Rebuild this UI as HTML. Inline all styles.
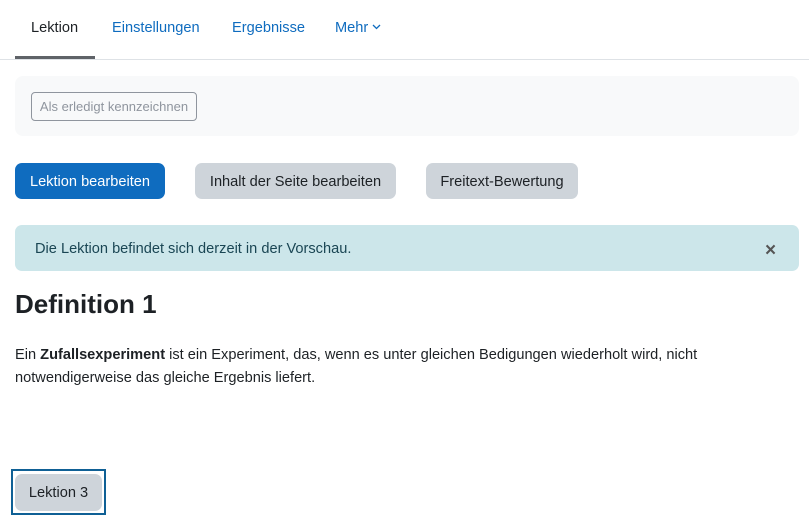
<!DOCTYPE html>
<html><head><meta charset="utf-8"><style>
*{box-sizing:border-box;margin:0;padding:0}
body{width:809px;height:529px;background:#fff;font-family:"Liberation Sans",sans-serif;color:#1d2125;font-size:14.6px;position:relative;overflow:hidden}
.a{position:absolute}
.tab{top:20px;font-size:14.6px;color:#0f6cbf}
.btn{position:absolute;top:163px;height:36px;border-radius:7px;font-size:14.6px;line-height:38px;text-align:center;background:#ced4da;color:#1d2125}
</style></head><body>
<div class="a tab" style="left:31px;color:#1d2125">Lektion</div>
<div class="a tab" style="left:112px">Einstellungen</div>
<div class="a tab" style="left:232px">Ergebnisse</div>
<div class="a tab" style="left:335px">Mehr <svg width="9" height="6" viewBox="0 0 9 6" style="vertical-align:2px"><path d="M1 1l3.5 3.5L8 1" stroke="#0f6cbf" stroke-width="1.3" fill="none"/></svg></div>
<div class="a" style="left:15px;top:56px;width:80px;height:4px;background:#5f6368"></div>
<div class="a" style="left:0;top:59px;width:809px;height:1px;background:#dee2e6"></div>
<div class="a" style="left:15px;top:76px;width:784px;height:60px;background:#f8f9fa;border-radius:8px"></div>
<div class="a" style="left:31px;top:92px;width:166px;height:29px;border:1px solid #8f959e;border-radius:4px;font-size:13px;color:#8f959e;line-height:28px;text-align:center">Als erledigt kennzeichnen</div>
<div class="btn" style="left:15px;width:150px;background:#0f6cbf;color:#fff">Lektion bearbeiten</div>
<div class="btn" style="left:195px;width:201px">Inhalt der Seite bearbeiten</div>
<div class="btn" style="left:426px;width:152px">Freitext-Bewertung</div>
<div class="a" style="left:15px;top:225px;width:784px;height:46px;background:#cce6ea;border-radius:7px"></div>
<div class="a" style="left:35px;top:241px;font-size:14.6px;color:#1a4654">Die Lektion befindet sich derzeit in der Vorschau.</div>
<div class="a" style="left:765px;top:240px;font-size:19px;font-weight:bold;color:#555">×</div>
<div class="a" style="left:15px;top:289px;font-size:26px;font-weight:bold">Definition 1</div>
<div class="a" style="left:15px;top:344px;width:780px;font-size:14.6px;line-height:23px">Ein <b>Zufallsexperiment</b> ist ein Experiment, das, wenn es unter gleichen Bedigungen wiederholt wird, nicht notwendigerweise das gleiche Ergebnis liefert.</div>
<div class="a" style="left:11px;top:469px;width:95px;height:46px;border:2px solid #0f6095"></div>
<div class="a" style="left:15px;top:474px;width:87px;height:37px;background:#ced4da;border-radius:7px;line-height:39px;text-align:center">Lektion 3</div>
</body></html>
